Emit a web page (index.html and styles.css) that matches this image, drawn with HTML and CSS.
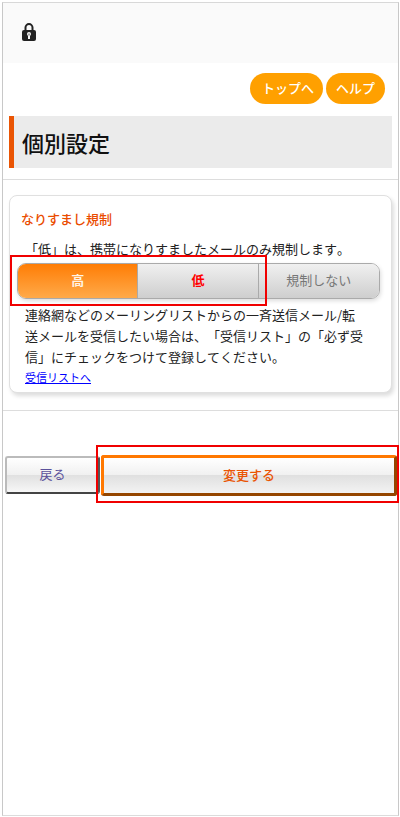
FILE: index.html
```html
<!DOCTYPE html>
<html lang="ja">
<head>
<meta charset="utf-8">
<meta name="viewport" content="width=device-width, initial-scale=1">
<title>個別設定</title>
<link rel="stylesheet" href="styles.css">
</head>
<body>
<div class="screen">
  <header class="address-bar">
    <svg class="lock" viewBox="0 0 14 18" aria-hidden="true">
      <path d="M3.5 8V4.6a3.5 3.5 0 0 1 7 0V8" fill="none" stroke="#222" stroke-width="2"/>
      <rect x="0" y="7" width="14" height="11" rx="2" fill="#222"/>
      <circle cx="7" cy="11" r="2" fill="#fafafa"/>
      <rect x="6" y="11" width="2" height="5" fill="#fafafa"/>
      <rect x="6.5" y="10.5" width="1" height="2" fill="#555"/>
    </svg>
  </header>
  <nav class="links">
    <a class="pill pill-top" href="#">トップへ</a>
    <a class="pill" href="#">ヘルプ</a>
  </nav>
  <h1 class="page-title">個別設定</h1>
  <main class="content">
    <section class="card">
      <h2 class="card-title">なりすまし規制</h2>
      <p class="lead">「低」は、携帯になりすましたメールのみ規制します。</p>
      <div class="segment-area">
        <div class="segments">
          <button class="segment selected" type="button">高</button>
          <button class="segment low" type="button">低</button>
          <button class="segment" type="button">規制しない</button>
        </div>
        <span class="mark mark-segments"></span>
      </div>
      <p class="note">連絡網などのメーリングリストからの一斉送信メール/転<br>送メールを受信したい場合は、「受信リスト」の「必ず受<br>信」にチェックをつけて登録してください。</p>
      <a class="list-link" href="#">受信リストへ</a>
    </section>
  </main>
  <div class="actions">
    <button class="back" type="button">戻る</button>
    <div class="submit-area">
      <button class="submit" type="button">変更する</button>
      <span class="mark mark-submit"></span>
    </div>
  </div>
</div>
</body>
</html>
```
FILE: styles.css
```css
* { box-sizing: border-box; }

body {
  margin: 0;
  padding: 2px 1px 1px 2px;
  background: #fff;
  color: #222;
  font: 13px/21px "Noto Sans CJK JP", sans-serif;
  font-kerning: none;
  text-spacing-trim: space-all;
}

h1, h2, p { margin: 0; }

button { margin: 0; padding: 0 0 3px; font: inherit; }

.screen {
  min-height: calc(100vh - 3px);
  border: 1px solid #c8c8c8;
  border-top-color: #d8d8d8;
  border-bottom-color: #dcdcdc;
}

.address-bar {
  height: 60px;
  padding: 20px 19px;
  background: #fafafa;
}

.lock { display: block; width: 14px; height: 18px; }

.links {
  display: flex;
  justify-content: flex-end;
  gap: 3px;
  padding: 10px 13px 12px;
}

.pill {
  height: 31px;
  padding: 0 10px;
  border-radius: 16px;
  background: #ffa000;
  color: #fff;
  font-weight: 500;
  line-height: 29px;
  text-decoration: none;
}

.pill-top { padding: 0 9px 0 12px; }

.page-title {
  height: 52px;
  margin: 0 6px 11px;
  padding-left: 8px;
  border-left: 5px solid #ea5504;
  background: #ebebeb;
  color: #111;
  font-size: 22px;
  font-weight: 500;
  line-height: 53px;
}

.content {
  padding: 15px 6px 17px;
  border: solid #ddd;
  border-width: 1px 0;
}

.card {
  height: 198px;
  padding: 12px 11px;
  border: 1px solid #e0e0e0;
  border-radius: 8px;
  background: #fff;
  box-shadow: 2px 3px 4px #ddd;
}

.card-title {
  padding-bottom: 9px;
  color: #ea4c00;
  font-size: 13px;
  font-weight: 500;
}

.lead, .note { padding-left: 4px; white-space: nowrap; }

.segment-area { position: relative; margin: 4px 0 5px -4px; }

.segments {
  display: grid;
  grid-template-columns: 1fr 1fr 1fr;
  height: 36px;
  overflow: hidden;
  border: 1px solid #aaa;
  border-radius: 9px;
  box-shadow: 1px 2px 4px #ddd;
}

.segment {
  border: 0;
  border-right: 1px solid #aaa;
  background: linear-gradient(#f0f0f0, #cecece);
  color: #777;
}

.segment:last-child { border-right: 0; }

.selected {
  background: linear-gradient(#ff7d05, #ffaa4a);
  color: #fff3e5;
  font-weight: 700;
}

.low { color: #f00; font-weight: 700; }

.mark {
  position: absolute;
  border: 2px solid #f00000;
  pointer-events: none;
}

.mark-segments { inset: -8px 31% -7px -7px; }

.list-link {
  display: block;
  width: max-content;
  margin-left: 4px;
  color: #00f;
  font-size: 11px;
  line-height: 21px;
}

.actions {
  display: flex;
  gap: 1px;
  padding: 44px 1px 0 2px;
}

.back {
  width: 95px;
  height: 38px;
  margin-top: 1px;
  border: 2px solid;
  border-color: #bbb #555 #444 #bbb;
  border-radius: 3px;
  background: linear-gradient(#fff, #f0f0f0 50%, #e0e0e0 50%, #f7f7f7);
  color: #5b519b;
}

.submit-area { position: relative; flex: 1; }

.submit {
  width: 100%;
  height: 41px;
  border: 3px solid;
  border-color: #ff7800 #954600 #954600 #ff7800;
  border-radius: 3px;
  background: linear-gradient(#fff, #f0f0f0 50%, #e0e0e0 50%, #f3f3f3);
  color: #ea5504;
  font-weight: 500;
}

.mark-submit { inset: -10px -2px -7px -5px; }
```
